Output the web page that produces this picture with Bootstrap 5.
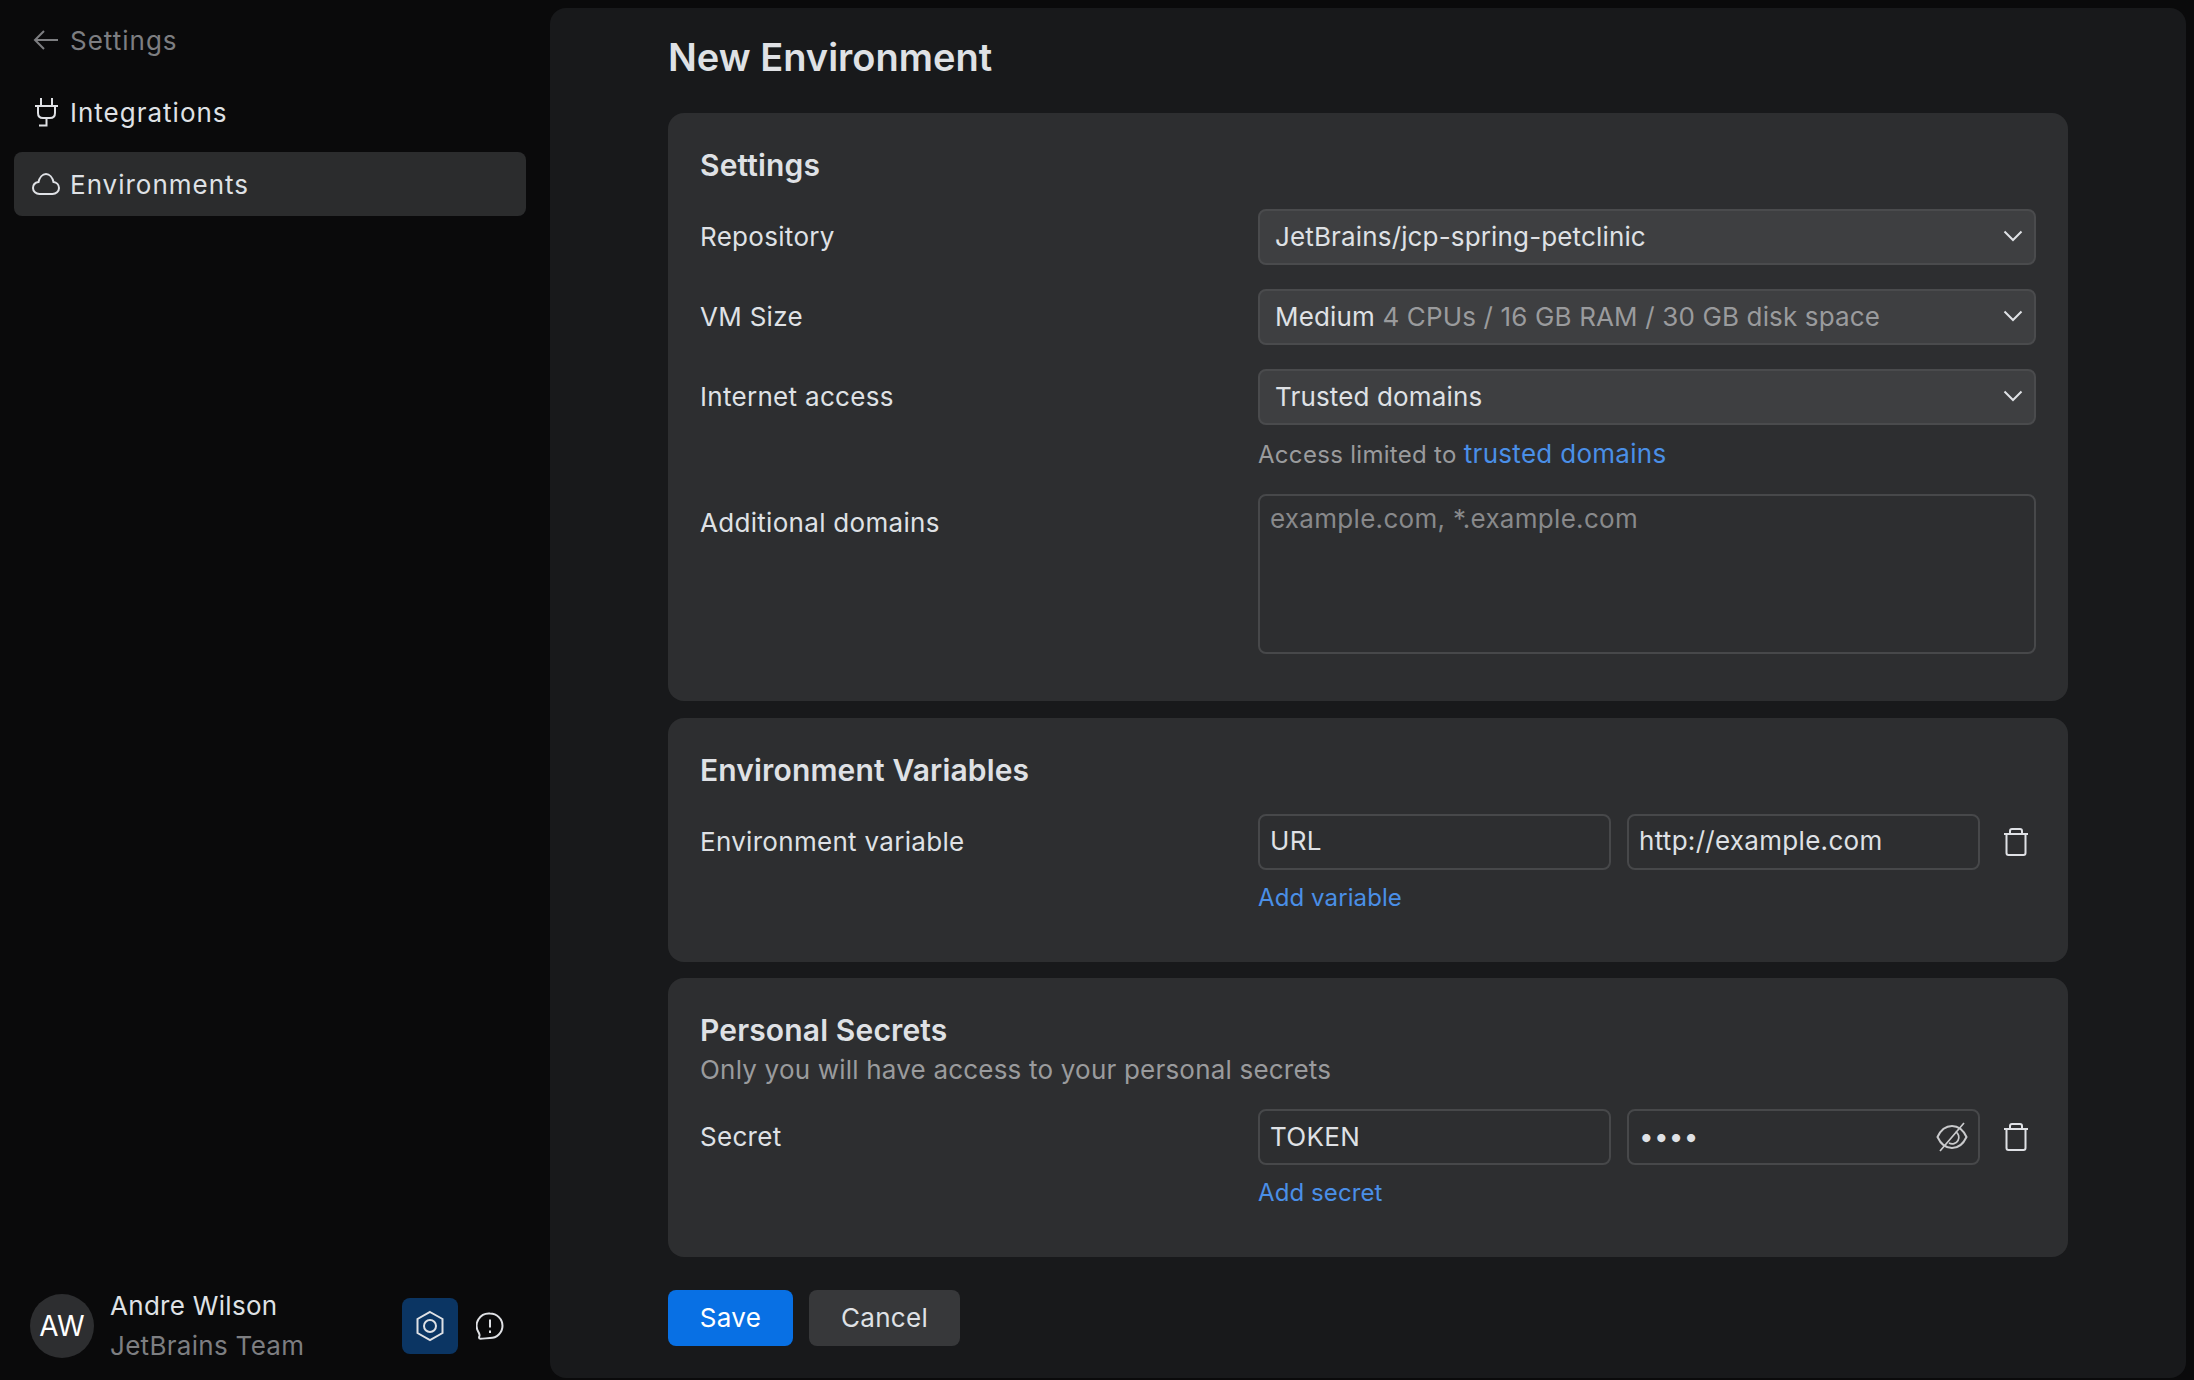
<!DOCTYPE html>
<html lang="en" data-bs-theme="dark">
<head>
    <meta charset="UTF-8">
    <meta name="viewport" content="width=device-width, initial-scale=1.0">
    <title>New Environment</title>
    <link href="https://cdn.jsdelivr.net/npm/bootstrap@5.3.0/dist/css/bootstrap.min.css" rel="stylesheet">
    <style>
        html, body {
            height: 100%;
        }
        body {
            font-family: Inter, "Liberation Sans", sans-serif;
            font-size: 26px;
            letter-spacing: .3px;
            background-color: #0a0a0b;
            color: #dfe1e5;
        }
        svg {
            fill: none;
            stroke: currentColor;
            stroke-width: 2;
            flex-shrink: 0;
        }
        .app-side {
            width: 550px;
            padding: 8px 24px 14px 14px;
        }
        .side-item {
            height: 64px;
            padding-left: 18px;
            gap: 10px;
            border-radius: 8px;
            letter-spacing: 1px;
        }
        .side-back {
            color: #7d7e81;
        }
        .side-active {
            background-color: #2b2c2d;
        }
        .avatar-circle {
            width: 64px;
            height: 64px;
            background-color: #2d2e30;
            color: #fff;
            font-size: 28px;
            letter-spacing: 0;
        }
        .user-block {
            padding-left: 16px;
            padding-right: 22px;
        }
        .user-name {
            line-height: 40px;
        }
        .user-team {
            line-height: 40px;
            color: #7d7e81;
        }
        .hex-btn {
            width: 56px;
            height: 56px;
            background-color: #0b3563;
            border-radius: 8px;
        }
        .chat-box {
            margin-left: 18px;
        }
        .app-main {
            margin: 8px 8px 2px 0;
            padding: 0 118px;
            background-color: #18191b;
            border-radius: 16px;
        }
        .page-title {
            font-size: 38px;
            font-weight: 600;
            height: 105px;
            padding-bottom: 5px;
            margin: 0;
            letter-spacing: 0;
            color: #dfe1e5;
        }
        .form-panel {
            background-color: #2d2e30;
            border-radius: 16px;
            padding: 32px;
            margin-bottom: 16.5px;
        }
        .panel-title {
            font-size: 30px;
            font-weight: 600;
            line-height: 40px;
            margin: 0 0 24px;
            letter-spacing: .15px;
            color: #dfe1e5;
        }
        .panel-sub {
            line-height: 36px;
            color: #9a9b9d;
            letter-spacing: .2px;
            margin: -22px 0 21px;
        }
        .row-label {
            width: 558px;
            flex-shrink: 0;
            line-height: 56px;
        }
        .row-controls {
            width: 778px;
        }
        .pick-box {
            height: 56px;
            padding: 0 11px 2px 15px;
            background-color: #3e3f41;
            border: 2px solid #4a4b4d;
            border-radius: 8px;
            letter-spacing: .15px;
        }
        .pick-note {
            color: #9a9b9d;
        }
        .row-gap {
            margin-bottom: 24px;
        }
        .field-hint {
            font-size: 24px;
            line-height: 36px;
            margin-top: 11px;
            margin-bottom: 21px;
            color: #9a9b9d;
        }
        .field-hint a {
            font-size: 26px;
            color: #4a8fe7;
            text-decoration: none;
        }
        .add-link {
            display: block;
            font-size: 24px;
            letter-spacing: .1px;
            line-height: 36px;
            margin-top: 10px;
            margin-bottom: 14px;
            color: #4a8fe7;
            text-decoration: none;
        }
        .domains-label {
            padding-top: 1px;
        }
        .form-control.dark-field {
            height: 56px;
            font-size: 26px;
            letter-spacing: .3px;
            color: #dfe1e5;
            background-color: #2d2e30;
            border: 2px solid #47484a;
            border-radius: 8px;
            padding: 0 10px 2px;
            box-shadow: none;
        }
        .form-control.dark-area {
            height: 160px;
            padding: 3px 10px;
            margin-bottom: 15px;
            resize: none;
        }
        .form-control.dark-field::placeholder {
            color: #88898b;
        }
        .env-field {
            width: 353px;
            flex-shrink: 0;
        }
        .secret-dots {
            padding-right: 60px;
        }
        .eye-icon {
            right: 12px;
            top: 13px;
            color: #c9cacc;
        }
        .trash-box {
            width: 56px;
            padding-right: 7px;
        }
        .act-btn {
            height: 56px;
            font-size: 26px;
            letter-spacing: .3px;
            border-radius: 8px;
            border: 0;
            display: flex;
            align-items: center;
            justify-content: center;
        }
        .act-save {
            width: 125px;
            background-color: #0870e4;
            color: #fff;
        }
        .act-cancel {
            width: 151px;
            background-color: #37383a;
            color: #dfe1e5;
        }
    </style>
</head>
<body>
    <div class="d-flex vh-100">
        <!-- sidebar -->
        <div class="app-side d-flex flex-column flex-shrink-0">
            <div class="d-flex flex-column gap-2">
                <div class="side-item side-back d-flex align-items-center">
                    <svg width="28" height="28" viewBox="0 0 28 28"><path d="M26 14H3M12 5l-9 9 9 9"/></svg>
                    <span>Settings</span>
                </div>
                <div class="side-item d-flex align-items-center">
                    <svg width="28" height="32" viewBox="0 0 28 32"><path d="M9 2v8M20 2v8M3 10h23M6 10v7c0 3 2 5 5 5h7c3 0 5-2 5-5v-7M14.500 22v7.500H7"/></svg>
                    <span>Integrations</span>
                </div>
                <div class="side-item side-active d-flex align-items-center">
                    <svg width="28" height="28" viewBox="0 0 28 28"><path d="M7.500 24h13c3.500 0 6.500-2.500 6.500-6 0-3.200-2.500-5.700-5.500-6C20.500 7.500 17.500 4 14 4S7.500 7.500 6.500 12C3.500 12.500 1 14.800 1 18c0 3.500 3 6 6.500 6z"/></svg>
                    <span>Environments</span>
                </div>
            </div>
            <div class="user-block d-flex align-items-center mt-auto">
                <div class="avatar-circle rounded-circle d-flex align-items-center justify-content-center flex-shrink-0">AW</div>
                <div class="ms-3 flex-grow-1">
                    <div class="user-name">Andre Wilson</div>
                    <div class="user-team">JetBrains Team</div>
                </div>
                <div class="hex-btn d-flex align-items-center justify-content-center">
                    <svg width="28" height="32" viewBox="0 0 28 32"><path d="M14 2l12.500 7v14L14 30 1.500 23V9z"/><circle cx="14" cy="16" r="6"/></svg>
                </div>
                <div class="chat-box d-flex align-items-center">
                    <svg width="28" height="28" viewBox="0 0 28 28"><path d="M14 1.500c6.900 0 12.500 5.500 12.500 12.300S20.900 26 14 26c-2.600 0-6.500 .8-9.500 .8-2 0-1.500-1.500-1-3.200.3-1.200-.5-2.200-1-3.400A12.300 12.300 0 0 1 14 1.500z"/><path d="M14 7.500v8M14 18.500v2.500"/></svg>
                </div>
            </div>
        </div>

        <!-- main -->
        <div class="app-main flex-grow-1">
            <h1 class="page-title d-flex align-items-center">New Environment</h1>

            <div class="form-panel">
                <h2 class="panel-title">Settings</h2>
                <div class="d-flex row-gap">
                    <div class="row-label">Repository</div>
                    <div class="row-controls pick-box d-flex align-items-center justify-content-between">
                        <span>JetBrains/jcp-spring-petclinic</span>
                        <svg width="20" height="12" viewBox="0 0 20 12"><path d="M1.500 1.500L10 10l8.500-8.500"/></svg>
                    </div>
                </div>
                <div class="d-flex row-gap">
                    <div class="row-label">VM Size</div>
                    <div class="row-controls pick-box d-flex align-items-center justify-content-between">
                        <span>Medium <span class="pick-note">4 CPUs / 16 GB RAM / 30 GB disk space</span></span>
                        <svg width="20" height="12" viewBox="0 0 20 12"><path d="M1.500 1.500L10 10l8.500-8.500"/></svg>
                    </div>
                </div>
                <div class="d-flex">
                    <div class="row-label">Internet access</div>
                    <div class="row-controls pick-box d-flex align-items-center justify-content-between">
                        <span>Trusted domains</span>
                        <svg width="20" height="12" viewBox="0 0 20 12"><path d="M1.500 1.500L10 10l8.500-8.500"/></svg>
                    </div>
                </div>
                <div class="d-flex">
                    <div class="row-label"></div>
                    <div class="field-hint">Access limited to <a href="#">trusted domains</a></div>
                </div>
                <div class="d-flex">
                    <div class="row-label domains-label">Additional domains</div>
                    <div class="row-controls">
                        <textarea class="form-control dark-field dark-area" placeholder="example.com, *.example.com"></textarea>
                    </div>
                </div>
            </div>

            <div class="form-panel">
                <h2 class="panel-title">Environment Variables</h2>
                <div class="d-flex">
                    <div class="row-label">Environment variable</div>
                    <div class="row-controls">
                        <div class="d-flex">
                            <input class="form-control dark-field env-field me-3" type="text" value="URL">
                            <input class="form-control dark-field env-field" type="text" value="http://example.com">
                            <div class="trash-box d-flex align-items-center justify-content-end">
                                <svg width="26" height="28" viewBox="0 0 26 28"><path d="M1 6h24M3.500 6v19c0 1.200 .8 2 2 2h15c1.200 0 2-.8 2-2V6M7 6V3c0-1.200 .8-2 2-2h8c1.200 0 2 .8 2 2v3"/></svg>
                            </div>
                        </div>
                        <a class="add-link" href="#">Add variable</a>
                    </div>
                </div>
            </div>

            <div class="form-panel">
                <h2 class="panel-title">Personal Secrets</h2>
                <div class="panel-sub">Only you will have access to your personal secrets</div>
                <div class="d-flex">
                    <div class="row-label">Secret</div>
                    <div class="row-controls">
                        <div class="d-flex">
                            <input class="form-control dark-field env-field me-3" type="text" value="TOKEN">
                            <div class="env-field position-relative">
                                <input class="form-control dark-field secret-dots" type="password" value="abcd">
                                <svg class="eye-icon position-absolute" width="32" height="30" viewBox="0 0 32 30"><path d="M1.500 15C5 7.500 10 4 16 4s11 3.500 14.500 11C27 22.500 22 26 16 26S5 22.500 1.500 15z"/><path d="M28 1L4 29M19.500 9.500A6.500 6.500 0 0 1 13 21" stroke-width="1.700"/></svg>
                            </div>
                            <div class="trash-box d-flex align-items-center justify-content-end">
                                <svg width="26" height="28" viewBox="0 0 26 28"><path d="M1 6h24M3.500 6v19c0 1.200 .8 2 2 2h15c1.200 0 2-.8 2-2V6M7 6V3c0-1.200 .8-2 2-2h8c1.200 0 2 .8 2 2v3"/></svg>
                            </div>
                        </div>
                        <a class="add-link" href="#">Add secret</a>
                    </div>
                </div>
            </div>

            <div class="d-flex gap-3 pt-3">
                <button class="act-btn act-save" type="button">Save</button>
                <button class="act-btn act-cancel" type="button">Cancel</button>
            </div>
        </div>
    </div>

    <script src="https://cdn.jsdelivr.net/npm/bootstrap@5.3.0/dist/js/bootstrap.bundle.min.js"></script>
</body>
</html>
